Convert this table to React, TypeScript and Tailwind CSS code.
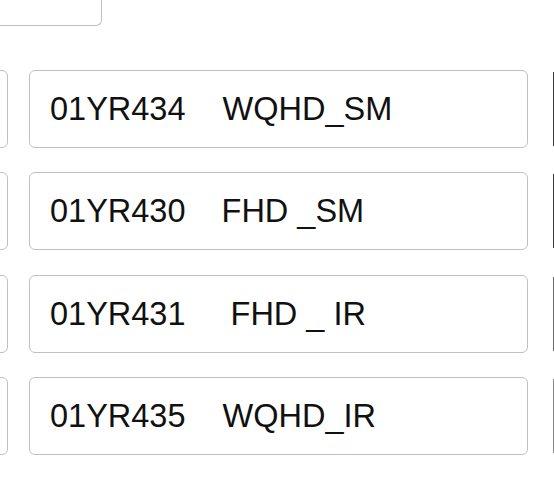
import React from "react";

interface Item {
  code: string;
  name: string;
  gap: string;
  edge: string;
}

const items: Item[] = [
  { code: "01YR434", name: "WQHD_SM", gap: "ml-[37px]", edge: "border-l-[#3a3a3a]" },
  { code: "01YR430", name: "FHD _SM", gap: "ml-[36px]", edge: "border-l-[#3a3a3a]" },
  { code: "01YR431", name: "FHD _ IR", gap: "ml-[45px]", edge: "border-l-[#6b6b6b]" },
  { code: "01YR435", name: "WQHD_IR", gap: "ml-[37px]", edge: "border-l-[#8a8a8a]" },
];

export default function App() {
  return (
    <div
      className="w-[554px] h-[478px] overflow-hidden bg-white"
      style={{ fontFamily: '"Liberation Sans", Arial, sans-serif' }}
    >
      <div className="w-[102px] h-[26px] border-r-[1.5px] border-b-[1.5px] border-[#bdc1c6] rounded-br-[6px]" />
      <div className="mt-[44px] flex flex-col gap-[24.4px]">
        {items.map((item) => (
          <div key={item.code} className="flex items-stretch h-[78px] -ml-[100px]">
            <div className="w-[108px] shrink-0 border-[1.5px] border-[#bdc1c6] rounded-[6px]" />
            <div className="ml-[21px] w-[499px] shrink-0 flex items-center pl-[20px] border-[1.5px] border-[#bdc1c6] rounded-[6px] text-[32.5px] text-[#111] whitespace-pre leading-none">
              <span>{item.code}</span>
              <span className={item.gap}>{item.name}</span>
            </div>
            <div className={`ml-[25px] w-[20px] shrink-0 my-[2px] border-l-2 ${item.edge}`} />
          </div>
        ))}
      </div>
    </div>
  );
}
